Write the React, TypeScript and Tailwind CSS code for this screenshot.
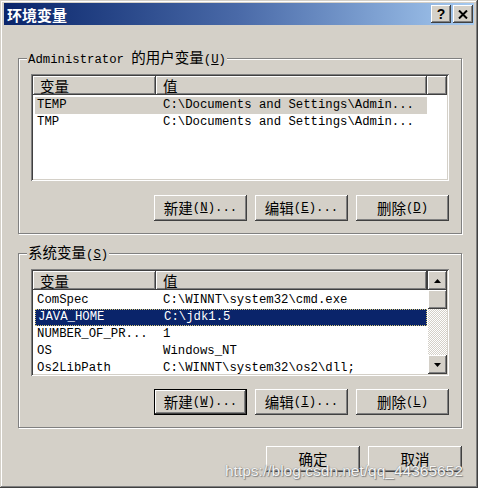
import React from 'react';

type Row = { name: string; value: string };

const userVars: Row[] = [
  { name: 'TEMP', value: 'C:\\Documents and Settings\\Admin...' },
  { name: 'TMP', value: 'C:\\Documents and Settings\\Admin...' },
];

const sysVars: Row[] = [
  { name: 'ComSpec', value: 'C:\\WINNT\\system32\\cmd.exe' },
  { name: 'JAVA_HOME', value: 'C:\\jdk1.5' },
  { name: 'NUMBER_OF_PR...', value: '1' },
  { name: 'OS', value: 'Windows_NT' },
  { name: 'Os2LibPath', value: 'C:\\WINNT\\system32\\os2\\dll;' },
];

const Cjk = ({ children }: { children: React.ReactNode }) => (
  <span className="text-[14.5px] font-['Noto_Sans_CJK_SC',sans-serif]">{children}</span>
);

const Key = ({ k }: { k: string }) => (
  <span>
    (<u>{k}</u>)
  </span>
);

const Btn: React.FC<{ children: React.ReactNode; def?: boolean; wide?: boolean }> = ({ children, def, wide }) => (
  <div
    className={`${wide ? 'w-[94px]' : 'w-[93px]'} h-[26px] flex items-center justify-center bg-[#d4d0c8] text-black ${
      def
        ? 'shadow-[inset_0_0_0_1px_#000,inset_-2px_-2px_#404040,inset_2px_2px_#fff,inset_-3px_-3px_#808080]'
        : 'shadow-[inset_-1px_-1px_#404040,inset_1px_1px_#fff,inset_-2px_-2px_#808080]'
    }`}
  >
    {children}
  </div>
);

const Arrow = ({ up }: { up?: boolean }) => (
  <svg width="7" height="4" viewBox="0 0 7 4">
    <path d={up ? 'M3.5 0 L7 4 L0 4 Z' : 'M0 0 L7 0 L3.5 4 Z'} fill="#000" />
  </svg>
);

const raised = 'shadow-[inset_-1px_-1px_#404040,inset_1px_1px_#fff,inset_-2px_-2px_#808080]';

const VarList: React.FC<{ rows: Row[]; selected: number; focused?: boolean; scroll?: boolean }> = ({
  rows,
  selected,
  focused,
  scroll,
}) => (
  <div className="h-[107px] bg-white p-[2px] flex shadow-[inset_1px_1px_#808080,inset_-1px_-1px_#fff,inset_2px_2px_#404040,inset_-2px_-2px_#d4d0c8]">
    <div className="flex-1 flex flex-col overflow-hidden">
      <div className="flex h-[19px] shrink-0 bg-[#d4d0c8]">
        <div className={`w-[123px] pl-[7px] flex items-center ${raised}`}>
          <Cjk>变量</Cjk>
        </div>
        <div className={`w-[271px] pl-[7px] flex items-center ${raised}`}>
          <Cjk>值</Cjk>
        </div>
        <div className={`flex-1 ${raised}`} />
      </div>
      <div className="pt-[2px]">
        {rows.map((r, i) => {
          const sel = i === selected;
          return (
            <div
              key={r.name}
              className={`w-[392px] ml-[2px] h-[17px] flex items-center whitespace-nowrap ${
                sel
                  ? focused
                    ? 'bg-[#0a246a] text-white border border-dotted border-[#d8c878]'
                    : 'bg-[#d4d0c8] text-black'
                  : 'text-black'
              }`}
            >
              <div className="w-[128px] pl-[2px] shrink-0">{r.name}</div>
              <div className="flex-1">{r.value}</div>
            </div>
          );
        })}
      </div>
    </div>
    {scroll && (
      <div className="w-[19px] flex flex-col">
        <div className={`h-[19px] flex items-center justify-center bg-[#d4d0c8] ${raised}`}>
          <Arrow up />
        </div>
        <div className={`h-[19px] bg-[#d4d0c8] ${raised}`} />
        <div className="flex-1 bg-[image:repeating-conic-gradient(#fff_0_25%,#d4d0c8_0_50%)] [background-size:2px_2px]" />
        <div className={`h-[19px] flex items-center justify-center bg-[#d4d0c8] ${raised}`}>
          <Arrow />
        </div>
      </div>
    )}
  </div>
);

const Group: React.FC<{ legend: React.ReactNode; children: React.ReactNode; className?: string }> = ({
  legend,
  children,
  className,
}) => (
  <fieldset
    className={`border border-[#808080] shadow-[inset_1px_1px_#fff,1px_1px_#fff] px-[12px] pb-[12px] pt-[6px] ${className ?? ''}`}
  >
    <legend className="-ml-[4px] px-[1px] leading-[16px] bg-[#d4d0c8]">{legend}</legend>
    {children}
  </fieldset>
);

export default function App() {
  return (
    <div className="w-[478px] h-[491px] bg-white text-[12.3px] text-black font-['Liberation_Mono','Noto_Sans_CJK_SC',monospace]">
      <div className="relative h-[488px] bg-[#d4d0c8] pt-[3px] px-[4px] shadow-[inset_-1px_-1px_#404040,inset_1px_1px_#d4d0c8,inset_-2px_-2px_#808080,inset_2px_2px_#fff]">
        {/* title bar */}
        <div className="h-[22px] flex items-center justify-between pl-[3px] pr-[1px] bg-linear-to-r from-[#0a246a] via-[#4a6aa8] to-[#a6caf0]">
          <span className="text-white font-bold text-[15px] leading-none font-['Noto_Sans_CJK_SC',sans-serif]">环境变量</span>
          <div className="flex gap-[2px]">
            <div className={`w-[20px] h-[18px] flex items-center justify-center bg-[#d4d0c8] ${raised}`}>
              <span className="font-bold text-[14px] leading-none font-['Liberation_Sans',sans-serif]">?</span>
            </div>
            <div className={`w-[20px] h-[18px] flex items-center justify-center bg-[#d4d0c8] ${raised}`}>
              <svg width="10" height="9" viewBox="0 0 10 9">
                <path d="M1 0.5 L9 8.5 M9 0.5 L1 8.5" stroke="#000" strokeWidth="2" />
              </svg>
            </div>
          </div>
        </div>

        <div className="pl-[14px] pr-[12px] pt-[24px]">
          <Group
            legend={
              <>
                Administrator <Cjk>的用户变量</Cjk>
                <Key k="U" />
              </>
            }
          >
            <VarList rows={userVars} selected={0} />
            <div className="flex justify-end gap-[8px] mt-[14px]">
              <Btn>
                <Cjk>新建</Cjk>
                <Key k="N" />
                ...
              </Btn>
              <Btn>
                <Cjk>编辑</Cjk>
                <Key k="E" />
                ...
              </Btn>
              <Btn>
                <Cjk>删除</Cjk>
                <Key k="D" />
              </Btn>
            </div>
          </Group>

          <Group
            className="mt-[10px]"
            legend={
              <>
                <Cjk>系统变量</Cjk>
                <Key k="S" />
              </>
            }
          >
            <VarList rows={sysVars} selected={1} focused scroll />
            <div className="flex justify-end gap-[8px] mt-[13px]">
              <Btn def>
                <Cjk>新建</Cjk>
                <Key k="W" />
                ...
              </Btn>
              <Btn>
                <Cjk>编辑</Cjk>
                <Key k="I" />
                ...
              </Btn>
              <Btn>
                <Cjk>删除</Cjk>
                <Key k="L" />
              </Btn>
            </div>
          </Group>

          <div className="flex justify-end gap-[8px] mt-[18px]">
            <Btn wide>
              <Cjk>确定</Cjk>
            </Btn>
            <Btn wide>
              <Cjk>取消</Cjk>
            </Btn>
          </div>
        </div>

        <div className="absolute left-[225px] top-[459px] text-[15.5px] text-[#f4f4f4] font-['Liberation_Sans',sans-serif] [text-shadow:0_0_1px_#666,1px_1px_1px_#888]">
          https://blog.csdn.net/qq_44365652
        </div>
      </div>
    </div>
  );
}
